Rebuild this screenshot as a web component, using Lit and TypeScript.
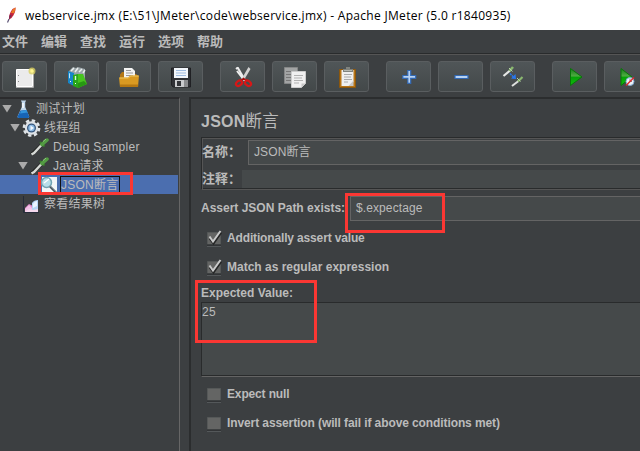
import { LitElement, html, css, svg, nothing } from "lit";
import { customElement, property } from "lit/decorators.js";

const icons: Record<string, unknown> = {
  feather: svg`<path d="M2.500 17.500 4 14" stroke="#5b5275" stroke-width="1.200"/><path d="M4 14.500C3.800 11 5 7 7.500 4L10.500 2.500c.2 4-1 6.500-4 10.500z" fill="#c5243c"/><path d="M6 8C7 5 8.500 3.500 10.500 2.500c.1 2-.6 3.700-1.600 5.700z" fill="#ea7a27"/><path d="M4 14c0-2 .3-3.300 1-4.600l1.800 1.200L5.500 13z" fill="#7c2855"/>`,
  fresh: svg`<path d="M2.500 3.500h16v17h-16z" fill="#ebebeb" stroke="#fff"/><path d="M2 21.500h17.500V5" stroke="#a9a9a9" fill="none"/><path d="M4 9.500h1M4 15.500h1" stroke="#888"/><circle cx="18" cy="5" r="3.500" fill="#d9cf62" opacity=".8"/><circle cx="18" cy="5" r="1.800" fill="#fff68f"/>`,
  templates: svg`<path d="m3 5 4-4 3 1 2-1 7 2v13l-7 4-9-5z" fill="#9aa5a8"/><path d="M5 5 8 2m1 4 3-4m1 4 3-3m1 4 2-3" stroke="#e9eeee" stroke-width="1.500"/><path d="m2 5 6 2v13l-6-3z" fill="#1686c8"/><path d="m3 7 1 .5v5l-1-.5z" fill="#b7e3fb"/><path d="m7 9 5-1v14l-5-2z" fill="#29a61b"/><path d="m12 8 5 0 4 10-9 4z" fill="#47c51f"/><path d="m12 22 9-4-3-3-6 2z" fill="#279812"/><path d="M9.500 10v4" stroke="#d5ffd0" stroke-width="1.400"/><path d="M4.500 15v1M9.500 17v1" stroke="#fff"/>`,
  open: svg`<path d="M2 8.500 4 6h5l1 2h8l2 2v10H2z" fill="#b37716"/><path d="M6 2h8l3 3v8H6z" fill="#f4f4f4"/><path d="M8 4.500h5M8 7h7M8 9.500h7" stroke="#999"/><path d="M1 11.500h9l2-2h9l-1 11.500H2z" fill="#d99a22"/><path d="M2 18.500h18.200l-.2 2.500H2z" fill="#b57812"/><path d="M1.500 12h9l2-2h8" stroke="#efc761" fill="none"/>`,
  save: svg`<path d="M1.500 2h19v19H3l-1.500-2z" fill="#303236" stroke="#202124"/><path d="M4 2h14v10H4z" fill="#f2f6fb"/><path d="M6 4.500h10M6 7h10M6 9.500h10" stroke="#9ebbe0"/><path d="M5 14h13v7H5z" fill="#c9cbcd"/><path d="M7 15h4v5H7z" fill="#333539"/><path d="M14 14h4v7h-4z" fill="#8b8d8f"/>`,
  cut: svg`<path d="m4.500 1.500 2-.5 7.500 13-2 1.500z" fill="#ececec"/><path d="m4 3 2-1.500M5 5l7 9" stroke="#eee" stroke-width="2"/><path d="m18.500 3-2-2-7 12 2.500 1z" fill="#d2d2d2"/><path d="m11.500 11.500 4 3-4-.5-4 1z" fill="#a30d0d"/><ellipse cx="7" cy="17.300" rx="3.300" ry="2.300" transform="rotate(-35 7 17.300)" fill="none" stroke="#d81717" stroke-width="2.200"/><ellipse cx="16" cy="17.300" rx="3.300" ry="2.300" transform="rotate(35 16 17.300)" fill="none" stroke="#d81717" stroke-width="2.200"/>`,
  copy: svg`<path d="M.5 1.500h13v16H.5z" fill="#a2a4a4" stroke="#858787"/><path d="M2 5.500h9M2 8.500h5M2 11.500h5M2 14.500h5" stroke="#777"/><path d="M7.500 5.500h14v12l-4 4h-10z" fill="#f0f0f0" stroke="#ccc"/><path d="M10 9.500h9M10 12h8M10 14.500h9M10 17h5" stroke="#b1b1b1"/><path d="M21.500 17.500h-4v4z" fill="#c6c6c6"/>`,
  paste: svg`<path d="M3.500 3.500h16v18h-16z" fill="#b87516" stroke="#8c570d"/><path d="M5.500 4h12v12l-4 4h-8z" fill="#efefef"/><path d="M17.500 14.500v5.500h-5z" fill="#c6c6c6"/><path d="M8 8.500h8M8 11h7M8 13.500h8M8 16h4" stroke="#aaa"/><path d="M7 6V3h3V1h4v2h3v3z" fill="#80837e"/><path d="M8 4.500h8" stroke="#b5b8b2"/>`,
  plus: svg`<path d="M9.800 4.500h2.900v5h5v2.900h-5v5H9.800v-5h-5V9.500h5z" fill="#b7d2f3" stroke="#3269b5" stroke-width="1.200"/>`,
  minus: svg`<path d="M5 9.500h13v3H5z" fill="#b7d2f3" stroke="#3269b5" stroke-width="1.200"/>`,
  toggle: svg`<path d="M1.500 10 8 4.500" stroke="#e6e8e6" stroke-width="2.200"/><path d="m7.500 5 3.500-4" stroke="#8ab870" stroke-width="2.600"/><path d="m7 2 3.500 3.500" stroke="#b8d4a7"/><path d="m10 20 6.500-5" stroke="#dfe1df" stroke-width="2"/><path d="m16 15.500 4.500-4.500" stroke="#8ab870" stroke-width="2.200"/><path d="m15 12 3.500 3.500" stroke="#b8d4a7"/><path d="m8 7.500 4 4" stroke="#2877ed" stroke-width="1.500" stroke-dasharray="2 .7"/><path d="m13.500 8 .5 5-5-.5z" fill="#2877ed"/>`,
  start: svg`<defs><linearGradient id="g" x2="0" y2="1"><stop stop-color="#187a1b"/><stop offset=".45" stop-color="#4fac42"/><stop offset=".5" stop-color="#06a008"/><stop offset="1" stop-color="#10bd0c"/></linearGradient></defs><path d="M6.500 2.500 18 11 6.500 19.500z" fill="url(#g)" stroke="#087708"/>`,
  nopause: svg`<defs><linearGradient id="h" x2="0" y2="1"><stop stop-color="#187a1b"/><stop offset=".45" stop-color="#4fac42"/><stop offset=".5" stop-color="#06a008"/><stop offset="1" stop-color="#10bd0c"/></linearGradient></defs><path d="M5 2.500 16 11 5 19.500z" fill="url(#h)" stroke="#087708"/><circle cx="14" cy="15.500" r="4" fill="#eef3f7" stroke="#7da6cf"/><path d="M14 12.500v3h2" stroke="#7b8793" fill="none"/><path d="m10 19.500 8-8" stroke="#e12828" stroke-width="1.500"/>`,
  flask: svg`<path d="M7 1.500h5v1h-.8v5.500l4 9.500q0 1.500-1.500 1.500H5q-1.500 0-1.500-1.500L7.800 8V2.500H7z" fill="#bfd7ec"/><path d="m6.500 11.500 6-.5 2.800 6.500q0 1.500-1.500 1.500H5q-1.500 0-1.500-1.500z" fill="#1764b6"/><path d="m7 12 5.500-1 1 2.500-7.500 1z" fill="#3394dc"/><path d="M9 4v5" stroke="#fff" stroke-width="1.400"/>`,
  gear: svg`<circle cx="9.500" cy="10" r="7.600" fill="none" stroke="#dfe4e8" stroke-width="2.500" stroke-dasharray="3.400 2.570"/><circle cx="9.500" cy="10" r="6.700" fill="#dfe3e7"/><circle cx="9.500" cy="10" r="4.500" fill="#36587f"/><circle cx="9.500" cy="10" r="3.200" fill="#8cbae4"/><path d="m8.500 7.500 3.500 2.500-3.500 2.500z" fill="#f1f8ff"/>`,
  dropper: svg`<path d="M1.500 17.500 11 8.500" stroke="#252725" stroke-width="3.600"/><path d="m1.500 17.500 2.500-1.500 7.500-8" stroke="#d7dad7" stroke-width="2.400" fill="none"/><path d="m10 5 4.500 4.500" stroke="#397d2b" stroke-width="2"/><path d="m12 7.500 5-4.500" stroke="#539c43" stroke-width="3.500" stroke-linecap="round"/><path d="m13 4.500 3-2.500" stroke="#91cb7e"/>`,
  magnifier: svg`<path d="M1 2h15v16H1z" fill="#f2f5f7"/><circle cx="5.500" cy="7.500" r="5" fill="#b8deea" stroke="#72a3b3" stroke-width="1.500"/><path d="m3 8 5-4" stroke="#fff" stroke-width="1.200"/><path d="m9 11.500 7 7" stroke="#44525c" stroke-width="2.200"/><path d="m9.500 11 7 7" stroke="#a9b4bb" stroke-width=".8"/>`,
  chart: svg`<path d="M1.500 2v16.500H17" fill="none" stroke="#252b39"/><path d="m3 14 4-4 4 2 1 6H3z" fill="#e389ce"/><path d="m3 15 4-4 3 3 2 4H3z" fill="#f2c2e6"/><path d="M10 9q2-3 6-3v12h-6z" fill="#b7d5f5"/><path d="M11 10q2-3 4-3v5l-4 2z" fill="#ebf5ff"/><path d="m3 18 4-3 4 1 5-1v3z" fill="#f5d9ed"/>`,
};

const glyph = (name: string, w = 22, h = 22) =>
  html`<svg class="glyph" width=${w} height=${h} viewBox="0 0 ${w} ${h}" fill="none">${icons[name]}</svg>`;

const toolGroups = [
  ["fresh", "templates", "open", "save"],
  ["cut", "copy", "paste"],
  ["plus", "minus", "toggle"],
  ["start", "nopause"],
];

const nodes = [
  { label: "测试计划", icon: "flask", indent: 2, expandable: true },
  { label: "线程组", icon: "gear", indent: 10, expandable: true },
  { label: "Debug Sampler", icon: "dropper", indent: 18 },
  { label: "Java请求", icon: "dropper", indent: 18, expandable: true },
  { label: "JSON断言", icon: "magnifier", indent: 29, selected: true },
  { label: "察看结果树", icon: "chart", indent: 10 },
];

@customElement("check-row")
class CheckRow extends LitElement {
  @property() label = "";
  @property({ type: Boolean }) checked = false;
  static styles = css`
    :host { display: flex; align-items: center; height: 29px; padding-left: 5px; gap: 5px; }
    .box { display: block; flex: none; }
    .label { font-weight: bold; letter-spacing: var(--track, 0); }
  `;
  render() {
    return html`<svg class="box" width="16" height="18" viewBox="0 0 16 18" fill="none">
        <path d="M1.500 3.500h13v12h-13z" fill="#646564" stroke="#555858"/>
        <path d="M1 16h14" stroke="#292b2c"/><path d="M1 17.500h14" stroke="#54585a"/>
        ${this.checked
          ? svg`<path d="m4 9.500 3.500 4.500L15 3.500" stroke="#252626" stroke-width="2.600"/><path d="m3.500 7.500 3.500 5L14.500 2" stroke="#c9caca" stroke-width="2"/>`
          : nothing}
      </svg><span class="label">${this.label}</span>`;
  }
}

@customElement("app-root")
class AppRoot extends LitElement {
  static styles = css`
    * { box-sizing: border-box; }
    :host {
      display: flex; flex-direction: column; width: 640px; height: 451px; overflow: hidden;
      position: relative; background: #3c3f41; color: #bbb; white-space: nowrap;
      font: 12px "Liberation Sans", "Noto Sans CJK SC", sans-serif;
    }
    .glyph { display: block; flex: none; }
    .titlebar { height: 30px; flex: none; background: #fff; color: #000; display: flex; align-items: center; padding-left: 5px; gap: 8px;
      font: 12px "Open Sans", "Noto Sans", sans-serif; }
    .caption { letter-spacing: .307px; }
    .menu { height: 25px; flex: none; display: flex; gap: 13px; padding: 1px 0 0 2px; font-size: 13px; line-height: 21px; font-weight: 700;
      border-bottom: 1px solid #555; box-shadow: inset 0 -1px #292b2c; }
    .toolbar { height: 42px; flex: none; display: flex; gap: 17px; padding: 6px 0 0 2px; }
    .group { display: flex; gap: 7px; }
    .tool { width: 45px; height: 31px; flex: none; border: 1px solid #5a5e60; border-radius: 3px;
      background: linear-gradient(#505658, #434849); display: flex; align-items: center; justify-content: center; }
    .body { flex: 1; min-height: 0; display: flex; }
    .tree { width: 180px; flex: none; border-top: 2px solid #2b2b2d; border-right: 1px solid #666; letter-spacing: .25px; }
    .node { height: 19px; width: 178px; display: flex; align-items: center; }
    .node.selected { background: #4b6eaf; }
    .arrow { width: 10px; height: 8px; margin-right: 2px; flex: none; }
    .arrow.open { background: #aaa; clip-path: polygon(0 0, 100% 0, 50% 100%); }
    .name { line-height: 16px; margin-left: 3px; }
    .dropper .name { margin-left: 4px; }
    .selected .name { border: 1px solid #111; height: 18px; margin-left: 0; }
    .panel { flex: 1; min-width: 0; margin-left: 9px; border-left: 2px solid #2b2d2e; border-top: 2px solid #2b2d2e; padding-left: 10px; }
    .heading { height: 38px; margin: 0; padding-top: 9px; line-height: 26px; font-size: 16px; font-weight: bold; letter-spacing: .25px; }
    .cjk { font-weight: 400; font-size: 16.5px; }
    .ident { height: 53px; border-top: 1px solid #292b2c; border-left: 1px solid #292b2c; border-bottom: 1px solid #555; box-shadow: inset 1px 1px #555, inset 0 -1px #292b2c; padding: 2px 0 2px 0; }
    .row { display: flex; align-items: center; }
    .label { font-weight: bold; }
    .ident .label { font-size: 13px; line-height: 17px; padding-bottom: 2px; }
    .field { flex: 1; background: #45494a; }
    .input { height: 25px; border: 1px solid #646464; border-right: 0; line-height: 23px; padding-left: 5px; letter-spacing: .1px; }
    .named .label { width: 46px; }
    .comment { margin-top: 5px; height: 18px; }
    .comment .label { width: 40px; }
    .comment .field { height: 18px; }
    .path { margin-top: 6px; }
    .path .label { width: 149px; padding-bottom: 1px; }
    .checks { padding-top: 2px; }
    .expected { height: 21px; line-height: 24px; }
    .area { height: 75px; background: #45494a; border: solid #292b2c; border-width: 1px 0 0 1px; border-bottom: 1px solid #646464; box-shadow: inset 0 -1px #292b2c; padding: 1px 0; line-height: 16px; letter-spacing: .3px; }
    .after { padding-top: 2px; }
    .tight { --track: -.1px; }
    .tighter { --track: -.15px; }
    .mark { position: absolute; border: 3px solid #fb3733; }
    .mark.node-mark { left: 38px; top: 172px; width: 95px; height: 23px; }
    .mark.path-mark { left: 345px; top: 193px; width: 100px; height: 40px; }
    .mark.value-mark { left: 195px; top: 280px; width: 122px; height: 63px; }
  `;

  render() {
    return html`
      <header class="titlebar">${glyph("feather", 12, 20)}<span class="caption">webservice.jmx (E:\\51\\JMeter\\code\\webservice.jmx) - Apache JMeter (5.0 r1840935)</span></header>
      <nav class="menu">${["文件", "编辑", "查找", "运行", "选项", "帮助"].map((m) => html`<span>${m}</span>`)}</nav>
      <div class="toolbar">
        ${toolGroups.map((g) => html`<div class="group">${g.map((i) => html`<div class="tool">${glyph(i)}</div>`)}</div>`)}
      </div>
      <div class="body">
        <aside class="tree">
          ${nodes.map((n) => html`
            <div class="node ${n.icon} ${n.selected ? "selected" : ""}" style="padding-left:${n.indent}px">
              <span class="arrow ${n.expandable ? "open" : ""}"></span>
              ${glyph(n.icon, 19, 20)}<span class="name">${n.label}</span>
            </div>`)}
        </aside>
        <main class="panel">
          <h1 class="heading">JSON<span class="cjk">断言</span></h1>
          <section class="ident">
            <div class="row named"><span class="label">名称：</span><div class="field input">JSON断言</div></div>
            <div class="row comment"><span class="label">注释：</span><div class="field"></div></div>
          </section>
          <div class="row path"><span class="label">Assert JSON Path exists:</span><div class="field input">$.expectage</div></div>
          <div class="checks">
            <check-row class="tighter" checked label="Additionally assert value"></check-row>
            <check-row checked label="Match as regular expression"></check-row>
          </div>
          <div class="label expected">Expected Value:</div>
          <div class="area">25</div>
          <div class="after">
            <check-row class="tighter" label="Expect null"></check-row>
            <check-row class="tight" label="Invert assertion (will fail if above conditions met)"></check-row>
          </div>
        </main>
      </div>
      <div class="mark node-mark"></div>
      <div class="mark path-mark"></div>
      <div class="mark value-mark"></div>
    `;
  }
}
